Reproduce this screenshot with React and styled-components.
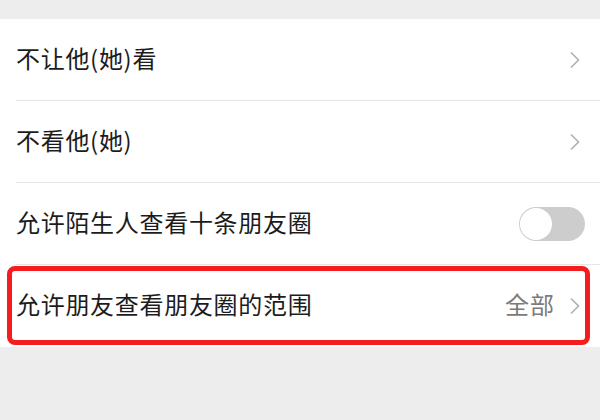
import React from "react";
import styled, { createGlobalStyle } from "styled-components";

const GlobalStyle = createGlobalStyle`
  html, body {
    margin: 0;
    padding: 0;
    background: #ededed;
  }
  body {
    font-family: "Noto Sans CJK SC", "Noto Sans", sans-serif;
  }
`;

const Page = styled.div`
  width: 600px;
  height: 420px;
  padding-top: 19px;
  box-sizing: border-box;
  background: #ededed;
`;

const List = styled.div`
  background: #fff;
`;

const Row = styled.div`
  position: relative;
  display: flex;
  align-items: center;
  height: 82px;
  padding: 0 19px 0 16px;
  box-sizing: border-box;

  &:not(:last-child)::before {
    content: "";
    position: absolute;
    left: 16px;
    right: 0;
    bottom: 0;
    height: 1px;
    background: #e6e6e6;
  }

  ${(p) =>
    p.$marked &&
    `
    &::after {
      content: "";
      position: absolute;
      left: 7px;
      right: 10px;
      top: 1px;
      bottom: 2px;
      border: 5px solid #f41c1c;
      border-radius: 8px;
    }
  `}
`;

const Label = styled.span`
  flex: 1;
  font-size: 24px;
  letter-spacing: 0.7px;
  color: #1c1c1c;
  padding-bottom: 5px;
`;

const Value = styled.span`
  font-size: 24px;
  letter-spacing: 1px;
  color: #7b7b7b;
  margin-right: 14px;
  padding-bottom: 5px;
`;

const Track = styled.div`
  width: 66px;
  height: 34px;
  border-radius: 17px;
  background: #cdcdcd;
  display: flex;
  align-items: center;
  padding: 1px;
  box-sizing: border-box;
  margin-right: -4px;
`;

const Knob = styled.div`
  width: 32px;
  height: 32px;
  border-radius: 50%;
  background: #fff;
`;

const Chevron = () => (
  <svg width="12" height="18" viewBox="0 0 12 18">
    <path
      d="M2 1.5 L9.5 9 L2 16.5"
      fill="none"
      stroke="#b0b0b0"
      strokeWidth="1.6"
    />
  </svg>
);

const rows = [
  { label: "不让他(她)看", kind: "link" },
  { label: "不看他(她)", kind: "link" },
  { label: "允许陌生人查看十条朋友圈", kind: "switch" },
  { label: "允许朋友查看朋友圈的范围", kind: "link", value: "全部", marked: true },
];

export default function App() {
  return (
    <Page>
      <GlobalStyle />
      <List>
        {rows.map((r) => (
          <Row key={r.label} $marked={r.marked}>
            <Label>{r.label}</Label>
            {r.value && <Value>{r.value}</Value>}
            {r.kind === "switch" ? (
              <Track>
                <Knob />
              </Track>
            ) : (
              <Chevron />
            )}
          </Row>
        ))}
      </List>
    </Page>
  );
}
